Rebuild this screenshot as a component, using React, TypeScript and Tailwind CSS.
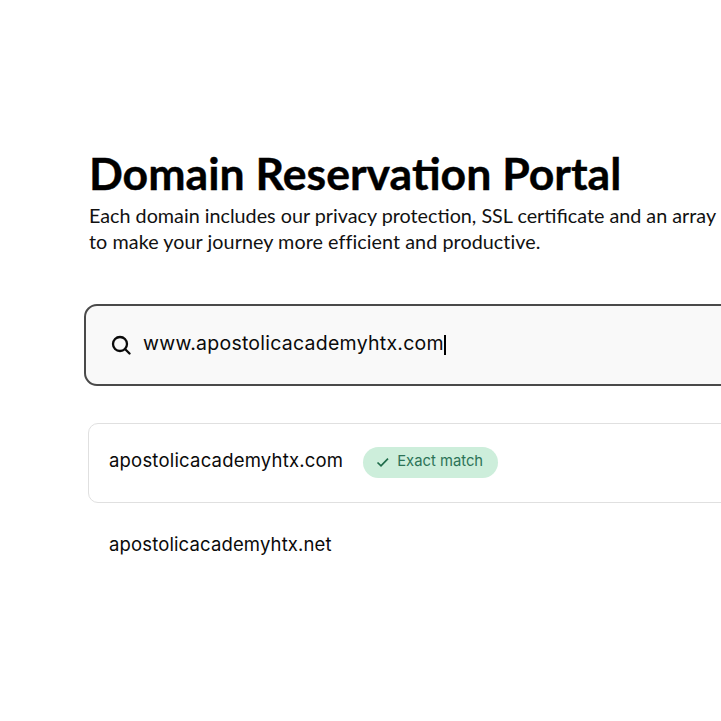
import React from "react";

function SearchIcon() {
  return (
    <svg width="20" height="20" viewBox="0 0 20 20" fill="none" stroke="#0a0a0a" strokeWidth="2.3" className="shrink-0">
      <circle cx="9" cy="9" r="7" />
      <path d="M14 14L18.5 18.5" strokeLinecap="round" />
    </svg>
  );
}

function CheckIcon() {
  return (
    <svg width="14" height="14" viewBox="0 0 14 14" fill="none" stroke="#1f6b4a" strokeWidth="1.7" className="shrink-0">
      <path d="M1.5 7.5L5 10.8L12 3.6" />
    </svg>
  );
}

export default function App() {
  return (
    <div className="h-[721px] w-[721px] overflow-hidden bg-white">
      <div className="w-[900px] pt-[148px] pl-[85px]">
        <h1 className="pl-[4px] font-['Lato',sans-serif] text-[44.6px] leading-[50px] font-bold text-black [-webkit-text-stroke:0.4px_black]">
          Domain Reservation Portal
        </h1>
        <p className="mt-[5px] pl-[4px] font-['Lato',sans-serif] text-[19.75px] leading-[26px] text-[#111111]">
          Each domain includes our privacy protection, SSL certificate and an array
          <br />
          <span className="tracking-[0.06px]">to make your journey more efficient and productive.</span>
        </p>
        <div className="mt-[49px] -ml-px flex h-[82px] w-[800px] items-center gap-[12px] rounded-[13px] border-2 border-[#4a4a4a] bg-[#f9f9f9] pl-[25px]">
          <SearchIcon />
          <div className="flex items-center font-['Inter',sans-serif] text-[19.5px] tracking-[0.25px] text-[#0a0a0a]">
            <span className="mb-[3px]">www.apostolicacademyhtx.com</span>
            <span className="h-[20px] w-[2px] bg-black" />
          </div>
        </div>
        <div className="mt-[37px] ml-[3px] flex h-[80px] w-[800px] items-center gap-[20px] rounded-[10px] border border-[#e0e0e0] pb-[2px] pl-[20px]">
          <span className="pb-[2px] font-['Inter',sans-serif] text-[18.5px] tracking-[0.2px] text-[#0a0a0a]">apostolicacademyhtx.com</span>
          <span className="flex h-[31px] items-center gap-[7px] rounded-full bg-[#cdeedb] pr-[15px] pl-[13px] font-['Inter',sans-serif] text-[14.8px] text-[#2c7357]">
            <CheckIcon />
            <span className="pb-px">Exact match</span>
          </span>
        </div>
        <div className="mt-[27px] ml-[24px] font-['Inter',sans-serif] text-[18.5px] leading-[28px] tracking-[0.14px] text-[#0a0a0a]">
          apostolicacademyhtx.net
        </div>
      </div>
    </div>
  );
}
